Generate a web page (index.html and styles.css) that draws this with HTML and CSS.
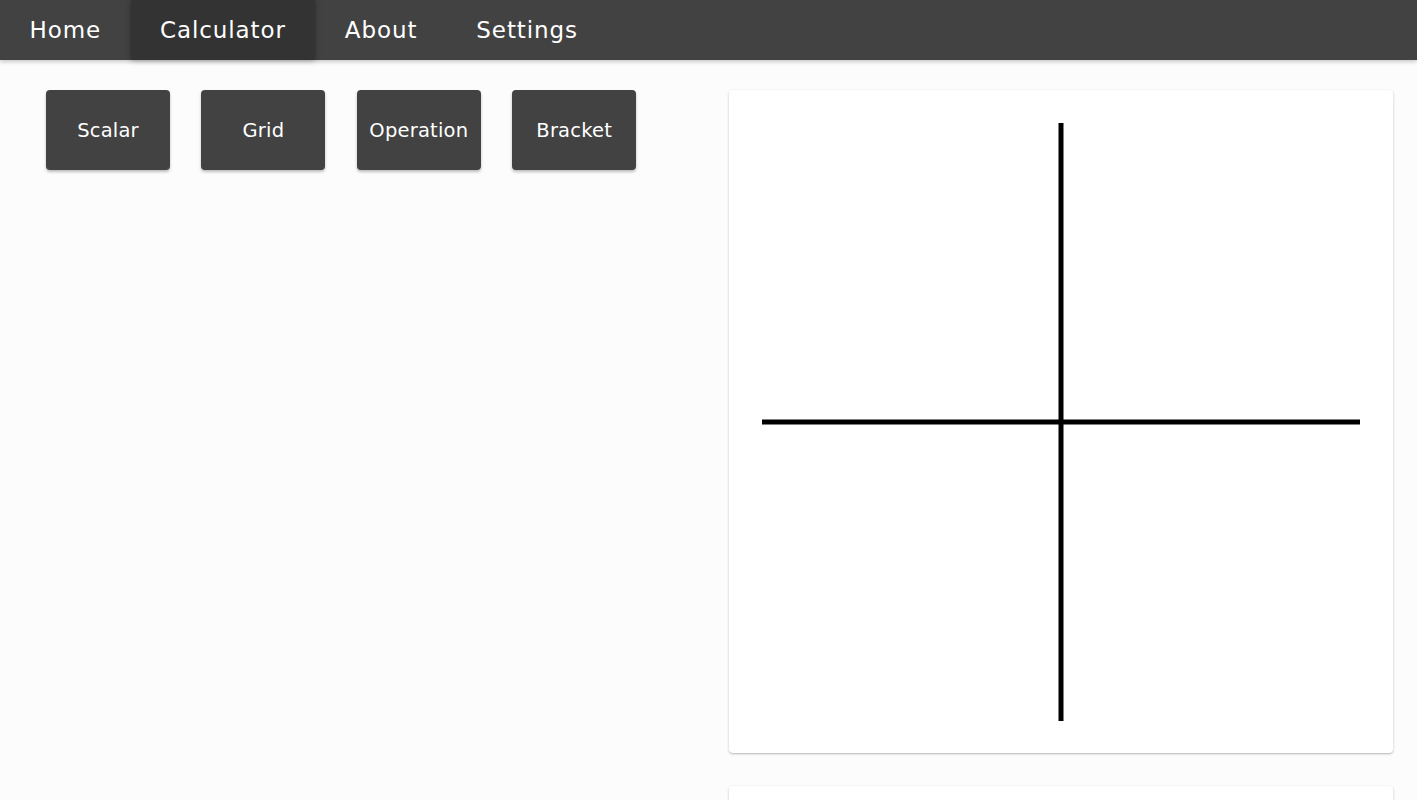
FILE: index.html
```html
<!DOCTYPE html>
<html>
<head>
<meta charset="utf-8">
<link rel="stylesheet" href="styles.css">
</head>
<body>
<nav class="nav">
  <a class="nav-item">Home</a>
  <a class="nav-item active">Calculator</a>
  <a class="nav-item">About</a>
  <a class="nav-item">Settings</a>
</nav>
<main class="main">
  <section class="left">
    <div class="btn-row">
      <button class="btn">Scalar</button>
      <button class="btn">Grid</button>
      <button class="btn">Operation</button>
      <button class="btn">Bracket</button>
    </div>
  </section>
  <section class="right">
    <div class="card">
      <svg class="plot" width="598" height="598" viewBox="0 0 598 598">
        <line x1="299" y1="0" x2="299" y2="598" stroke="#000" stroke-width="5"/>
        <line x1="0" y1="299" x2="598" y2="299" stroke="#000" stroke-width="5"/>
      </svg>
    </div>
    <div class="card card2"></div>
  </section>
</main>
</body>
</html>
```
FILE: styles.css
```css
html, body { margin: 0; padding: 0; }
body {
  background: #fcfcfc;
  font-family: "DejaVu Sans", "Open Sans", sans-serif;
  overflow: hidden;
  height: 800px;
}
.nav {
  height: 60px;
  background: #424242;
  display: flex;
  box-shadow: 0 2px 4px rgba(0,0,0,0.2);
  position: relative;
  z-index: 2;
}
.nav-item {
  color: #fff;
  font-size: 23px;
  padding: 0 29.5px;
  display: flex;
  align-items: center;
  letter-spacing: 0.9px;
}
.nav-item.active {
  background: #333333;
  box-shadow: 0 0 6px rgba(0,0,0,0.35);
}
.main {
  display: flex;
  padding: 30px 24px 0 46px;
  gap: 93px;
}
.left { flex: 1; }
.btn-row { display: flex; gap: 31.4px; }
.btn {
  width: 124px;
  height: 80px;
  background: #424242;
  color: #fff;
  border: none;
  border-radius: 4px;
  font-family: inherit;
  font-size: 19.5px;
  letter-spacing: 0.2px;
  box-shadow: 0 2px 3px rgba(0,0,0,0.25);
  padding: 0;
}
.right {
  width: 664px;
  display: flex;
  flex-direction: column;
  gap: 33px;
}
.card {
  background: #fff;
  border-radius: 4px;
  box-shadow: 0 1px 3px rgba(0,0,0,0.2), 0 1px 1px rgba(0,0,0,0.1);
  padding: 33px 33px 32px 33px;
}
.plot { display: block; }
.card2 { height: 100px; padding: 0; }
```
